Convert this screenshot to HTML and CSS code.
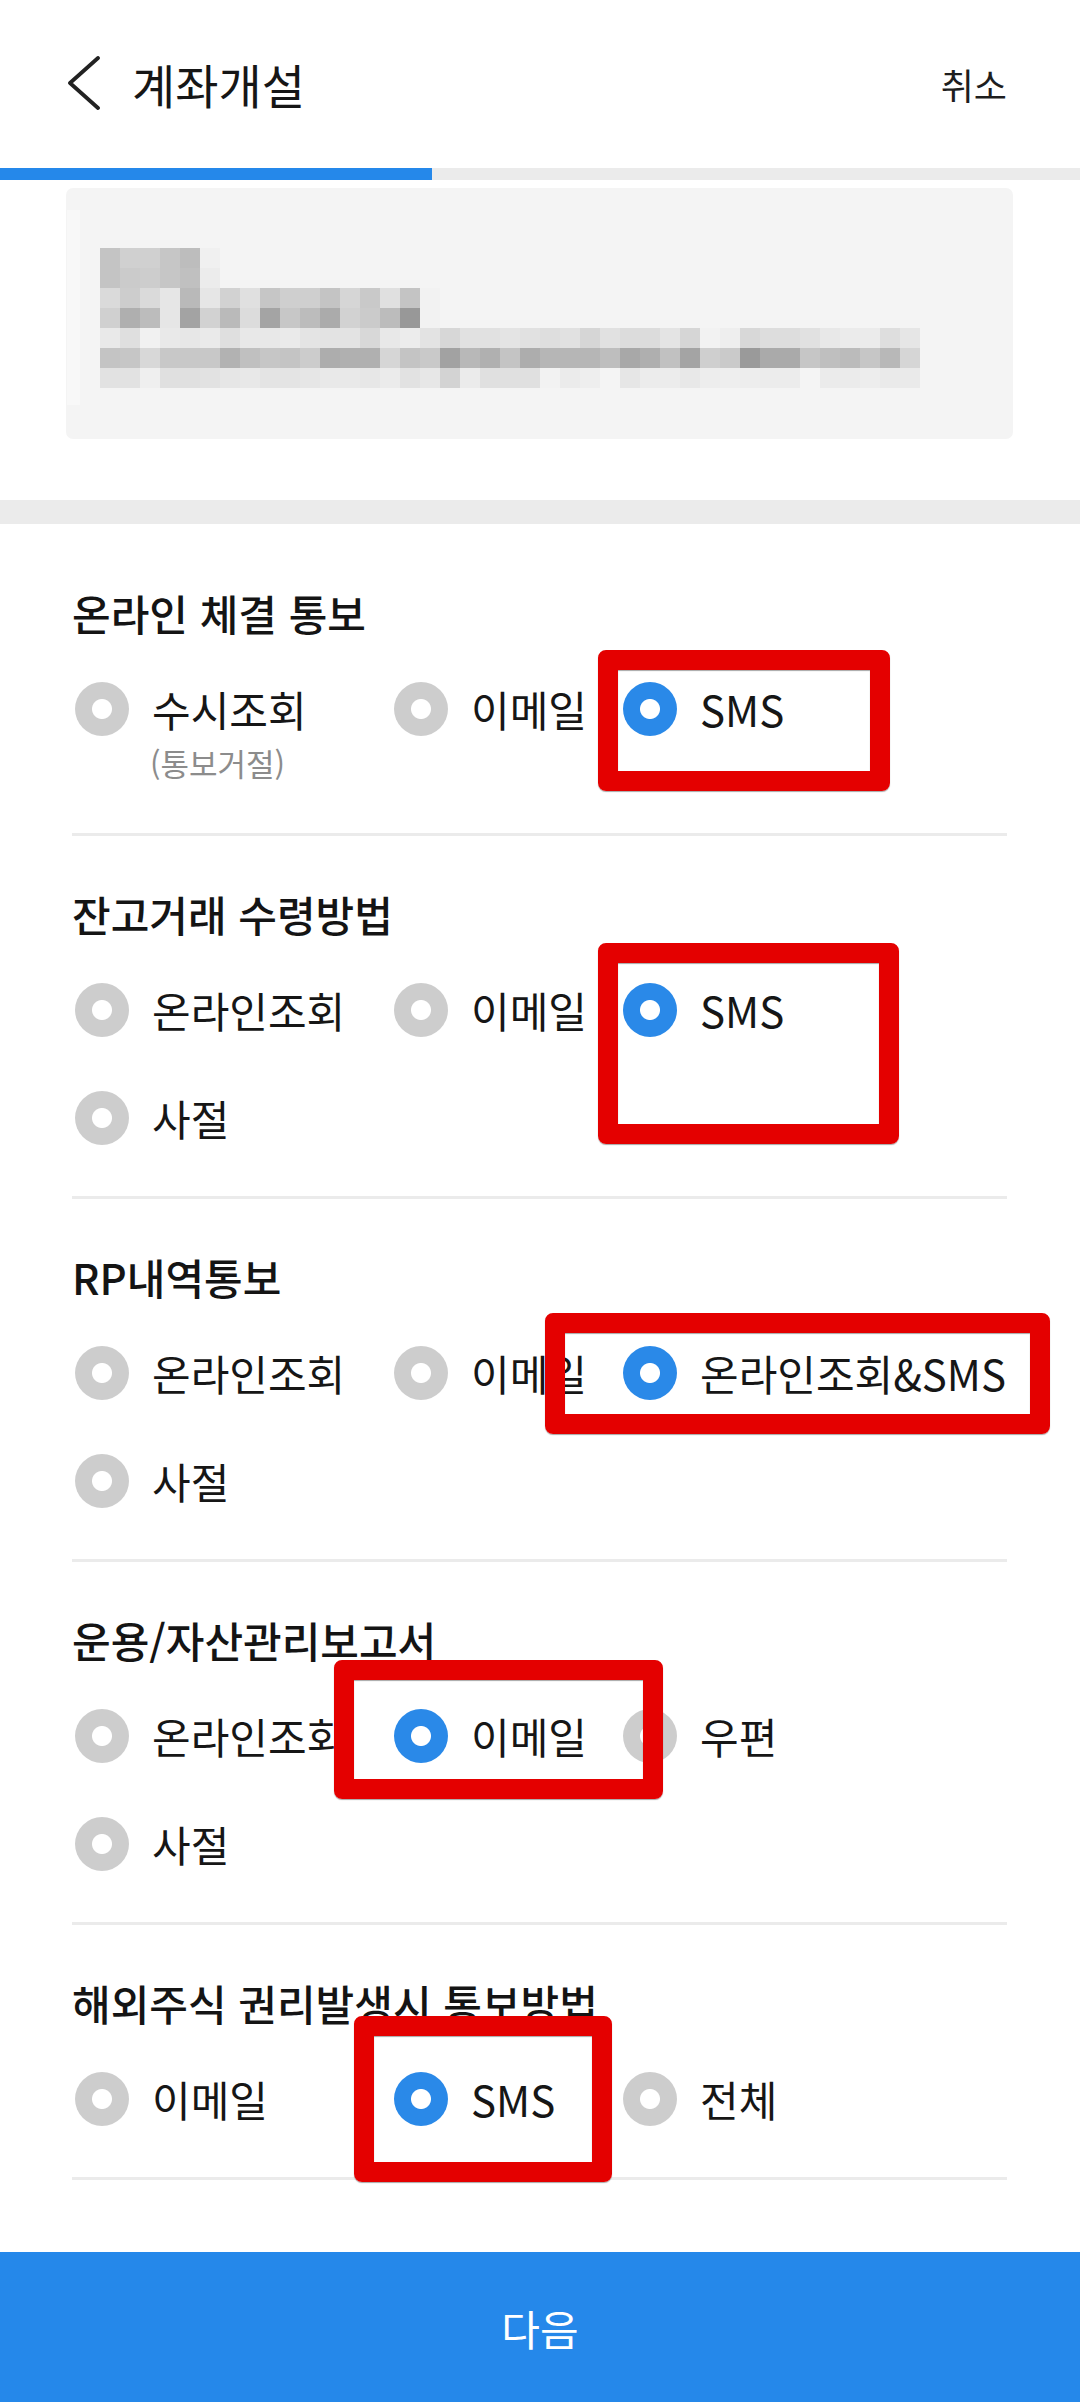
FILE: index.html
```html
<!DOCTYPE html>
<html lang="ko">
<head>
<meta charset="utf-8">
<title>계좌개설</title>
<link rel="stylesheet" href="styles.css">
</head>
<body>
<div class="page">
  <header class="appbar">
    <svg class="back" viewBox="0 0 40 56" width="40" height="56" aria-hidden="true"><path d="M34 2 L6 27 L34 52" fill="none" stroke="#222" stroke-width="3.8" stroke-linecap="round" stroke-linejoin="round"/></svg>
    <h1 class="title">계좌개설</h1>
    <span class="cancel">취소</span>
  </header>
  <div class="progress"><div class="progress-fill"></div></div>

  <div class="notice">
    <svg class="mosaic" viewBox="0 0 947 251" width="947" height="251" shape-rendering="crispEdges" aria-hidden="true">
      <rect x="1" y="22" width="13" height="195" fill="#f8f8f8"/>
      <g transform="translate(34 60) scale(20)">
        <rect x="0" y="0" width="1" height="1" fill="#c4c4c4"/><rect x="1" y="0" width="1" height="1" fill="#d0d0d0"/><rect x="2" y="0" width="1" height="1" fill="#d0d0d0"/><rect x="3" y="0" width="1" height="1" fill="#c6c6c6"/><rect x="4" y="0" width="1" height="1" fill="#bdbdbd"/><rect x="5" y="0" width="1" height="1" fill="#f0f0f0"/>
        <rect x="0" y="1" width="1" height="1" fill="#c4c4c4"/><rect x="1" y="1" width="1" height="1" fill="#cbcbcb"/><rect x="2" y="1" width="1" height="1" fill="#cdcdcd"/><rect x="3" y="1" width="1" height="1" fill="#c6c6c6"/><rect x="4" y="1" width="1" height="1" fill="#c0c0c0"/><rect x="5" y="1" width="1" height="1" fill="#ececec"/>
        <rect x="0" y="2" width="1" height="1" fill="#dadada"/><rect x="1" y="2" width="1" height="1" fill="#cdcdcd"/><rect x="2" y="2" width="1" height="1" fill="#dadada"/><rect x="3" y="2" width="1" height="1" fill="#e6e6e6"/><rect x="4" y="2" width="1" height="1" fill="#b9b9b9"/><rect x="5" y="2" width="1" height="1" fill="#e6e6e6"/><rect x="6" y="2" width="1" height="1" fill="#d2d2d2"/><rect x="7" y="2" width="1" height="1" fill="#e0e0e0"/><rect x="8" y="2" width="1" height="1" fill="#c6c6c6"/><rect x="9" y="2" width="1" height="1" fill="#cfcfcf"/><rect x="10" y="2" width="1" height="1" fill="#cfcfcf"/><rect x="11" y="2" width="1" height="1" fill="#c4c4c4"/><rect x="12" y="2" width="1" height="1" fill="#d6d6d6"/><rect x="13" y="2" width="1" height="1" fill="#c9c9c9"/><rect x="14" y="2" width="1" height="1" fill="#e0e0e0"/><rect x="15" y="2" width="1" height="1" fill="#c4c4c4"/><rect x="16" y="2" width="1" height="1" fill="#f2f2f2"/>
        <rect x="0" y="3" width="1" height="1" fill="#d0d0d0"/><rect x="1" y="3" width="1" height="1" fill="#afafaf"/><rect x="2" y="3" width="1" height="1" fill="#bcbcbc"/><rect x="3" y="3" width="1" height="1" fill="#e6e6e6"/><rect x="4" y="3" width="1" height="1" fill="#a3a3a3"/><rect x="5" y="3" width="1" height="1" fill="#d2d2d2"/><rect x="6" y="3" width="1" height="1" fill="#bababa"/><rect x="7" y="3" width="1" height="1" fill="#dcdcdc"/><rect x="8" y="3" width="1" height="1" fill="#a4a4a4"/><rect x="9" y="3" width="1" height="1" fill="#c7c7c7"/><rect x="10" y="3" width="1" height="1" fill="#bcbcbc"/><rect x="11" y="3" width="1" height="1" fill="#ababab"/><rect x="12" y="3" width="1" height="1" fill="#d2d2d2"/><rect x="13" y="3" width="1" height="1" fill="#cbcbcb"/><rect x="14" y="3" width="1" height="1" fill="#bcbcbc"/><rect x="15" y="3" width="1" height="1" fill="#989898"/><rect x="16" y="3" width="1" height="1" fill="#f2f2f2"/>
        <rect x="0" y="4" width="1" height="1" fill="#e9e9e9"/><rect x="1" y="4" width="1" height="1" fill="#dfdfdf"/><rect x="2" y="4" width="1" height="1" fill="#f1f1f1"/><rect x="3" y="4" width="1" height="1" fill="#e9e9e9"/><rect x="4" y="4" width="1" height="1" fill="#e7e7e7"/><rect x="5" y="4" width="1" height="1" fill="#eaeaea"/><rect x="6" y="4" width="1" height="1" fill="#dfdfdf"/><rect x="7" y="4" width="1" height="1" fill="#e8e8e8"/><rect x="8" y="4" width="1" height="1" fill="#e8e8e8"/><rect x="9" y="4" width="1" height="1" fill="#eaeaea"/><rect x="10" y="4" width="1" height="1" fill="#e4e4e4"/><rect x="11" y="4" width="1" height="1" fill="#e3e3e3"/><rect x="12" y="4" width="1" height="1" fill="#e3e3e3"/><rect x="13" y="4" width="1" height="1" fill="#d8d8d8"/><rect x="14" y="4" width="1" height="1" fill="#e8e8e8"/><rect x="15" y="4" width="1" height="1" fill="#ececec"/><rect x="16" y="4" width="1" height="1" fill="#e3e3e3"/><rect x="17" y="4" width="1" height="1" fill="#d7d7d7"/><rect x="18" y="4" width="1" height="1" fill="#e1e1e1"/><rect x="19" y="4" width="1" height="1" fill="#e1e1e1"/><rect x="20" y="4" width="1" height="1" fill="#e4e4e4"/><rect x="21" y="4" width="1" height="1" fill="#e1e1e1"/><rect x="22" y="4" width="1" height="1" fill="#dedede"/><rect x="23" y="4" width="1" height="1" fill="#e1e1e1"/><rect x="24" y="4" width="1" height="1" fill="#d6d6d6"/><rect x="25" y="4" width="1" height="1" fill="#e1e1e1"/><rect x="26" y="4" width="1" height="1" fill="#dcdcdc"/><rect x="27" y="4" width="1" height="1" fill="#dcdcdc"/><rect x="28" y="4" width="1" height="1" fill="#e4e4e4"/><rect x="29" y="4" width="1" height="1" fill="#d6d6d6"/><rect x="30" y="4" width="1" height="1" fill="#f2f2f2"/><rect x="31" y="4" width="1" height="1" fill="#eeeeee"/><rect x="32" y="4" width="1" height="1" fill="#d8d8d8"/><rect x="33" y="4" width="1" height="1" fill="#dddddd"/><rect x="34" y="4" width="1" height="1" fill="#dddddd"/><rect x="35" y="4" width="1" height="1" fill="#e1e1e1"/><rect x="36" y="4" width="1" height="1" fill="#e8e8e8"/><rect x="37" y="4" width="1" height="1" fill="#ebebeb"/><rect x="38" y="4" width="1" height="1" fill="#ebebeb"/><rect x="39" y="4" width="1" height="1" fill="#dedede"/><rect x="40" y="4" width="1" height="1" fill="#e6e6e6"/>
        <rect x="0" y="5" width="1" height="1" fill="#c4c4c4"/><rect x="1" y="5" width="1" height="1" fill="#c6c6c6"/><rect x="2" y="5" width="1" height="1" fill="#d8d8d8"/><rect x="3" y="5" width="1" height="1" fill="#c8c8c8"/><rect x="4" y="5" width="1" height="1" fill="#c8c8c8"/><rect x="5" y="5" width="1" height="1" fill="#c8c8c8"/><rect x="6" y="5" width="1" height="1" fill="#b2b2b2"/><rect x="7" y="5" width="1" height="1" fill="#c0c0c0"/><rect x="8" y="5" width="1" height="1" fill="#c6c6c6"/><rect x="9" y="5" width="1" height="1" fill="#c4c4c4"/><rect x="10" y="5" width="1" height="1" fill="#cccccc"/><rect x="11" y="5" width="1" height="1" fill="#adadad"/><rect x="12" y="5" width="1" height="1" fill="#b0b0b0"/><rect x="13" y="5" width="1" height="1" fill="#b0b0b0"/><rect x="14" y="5" width="1" height="1" fill="#d6d6d6"/><rect x="15" y="5" width="1" height="1" fill="#c4c4c4"/><rect x="16" y="5" width="1" height="1" fill="#c9c9c9"/><rect x="17" y="5" width="1" height="1" fill="#a2a2a2"/><rect x="18" y="5" width="1" height="1" fill="#b8b8b8"/><rect x="19" y="5" width="1" height="1" fill="#b0b0b0"/><rect x="20" y="5" width="1" height="1" fill="#c4c4c4"/><rect x="21" y="5" width="1" height="1" fill="#adadad"/><rect x="22" y="5" width="1" height="1" fill="#b6b6b6"/><rect x="23" y="5" width="1" height="1" fill="#b6b6b6"/><rect x="24" y="5" width="1" height="1" fill="#b6b6b6"/><rect x="25" y="5" width="1" height="1" fill="#bebebe"/><rect x="26" y="5" width="1" height="1" fill="#a8a8a8"/><rect x="27" y="5" width="1" height="1" fill="#afafaf"/><rect x="28" y="5" width="1" height="1" fill="#c1c1c1"/><rect x="29" y="5" width="1" height="1" fill="#a4a4a4"/><rect x="30" y="5" width="1" height="1" fill="#cfcfcf"/><rect x="31" y="5" width="1" height="1" fill="#cacaca"/><rect x="32" y="5" width="1" height="1" fill="#9a9a9a"/><rect x="33" y="5" width="1" height="1" fill="#aaaaaa"/><rect x="34" y="5" width="1" height="1" fill="#aaaaaa"/><rect x="35" y="5" width="1" height="1" fill="#c6c6c6"/><rect x="36" y="5" width="1" height="1" fill="#bfbfbf"/><rect x="37" y="5" width="1" height="1" fill="#bbbbbb"/><rect x="38" y="5" width="1" height="1" fill="#c6c6c6"/><rect x="39" y="5" width="1" height="1" fill="#b8b8b8"/><rect x="40" y="5" width="1" height="1" fill="#d6d6d6"/>
        <rect x="0" y="6" width="1" height="1" fill="#e2e2e2"/><rect x="1" y="6" width="1" height="1" fill="#e2e2e2"/><rect x="2" y="6" width="1" height="1" fill="#efefef"/><rect x="3" y="6" width="1" height="1" fill="#e0e0e0"/><rect x="4" y="6" width="1" height="1" fill="#e0e0e0"/><rect x="5" y="6" width="1" height="1" fill="#e2e2e2"/><rect x="6" y="6" width="1" height="1" fill="#e6e6e6"/><rect x="7" y="6" width="1" height="1" fill="#e8e8e8"/><rect x="8" y="6" width="1" height="1" fill="#e4e4e4"/><rect x="9" y="6" width="1" height="1" fill="#e4e4e4"/><rect x="10" y="6" width="1" height="1" fill="#e6e6e6"/><rect x="11" y="6" width="1" height="1" fill="#e9e9e9"/><rect x="12" y="6" width="1" height="1" fill="#e9e9e9"/><rect x="13" y="6" width="1" height="1" fill="#e7e7e7"/><rect x="14" y="6" width="1" height="1" fill="#ebebeb"/><rect x="15" y="6" width="1" height="1" fill="#e2e2e2"/><rect x="16" y="6" width="1" height="1" fill="#e7e7e7"/><rect x="17" y="6" width="1" height="1" fill="#d3d3d3"/><rect x="18" y="6" width="1" height="1" fill="#ebebeb"/><rect x="19" y="6" width="1" height="1" fill="#e0e0e0"/><rect x="20" y="6" width="1" height="1" fill="#e0e0e0"/><rect x="21" y="6" width="1" height="1" fill="#e0e0e0"/><rect x="22" y="6" width="1" height="1" fill="#f2f2f2"/><rect x="23" y="6" width="1" height="1" fill="#ebebeb"/><rect x="24" y="6" width="1" height="1" fill="#eeeeee"/><rect x="25" y="6" width="1" height="1" fill="#f4f4f4"/><rect x="26" y="6" width="1" height="1" fill="#e6e6e6"/><rect x="27" y="6" width="1" height="1" fill="#ececec"/><rect x="28" y="6" width="1" height="1" fill="#ececec"/><rect x="29" y="6" width="1" height="1" fill="#e8e8e8"/><rect x="30" y="6" width="1" height="1" fill="#ededed"/><rect x="31" y="6" width="1" height="1" fill="#eeeeee"/><rect x="32" y="6" width="1" height="1" fill="#ededed"/><rect x="33" y="6" width="1" height="1" fill="#ececec"/><rect x="34" y="6" width="1" height="1" fill="#ececec"/><rect x="35" y="6" width="1" height="1" fill="#f4f4f4"/><rect x="36" y="6" width="1" height="1" fill="#ebebeb"/><rect x="37" y="6" width="1" height="1" fill="#ebebeb"/><rect x="38" y="6" width="1" height="1" fill="#ededed"/><rect x="39" y="6" width="1" height="1" fill="#eaeaea"/><rect x="40" y="6" width="1" height="1" fill="#eaeaea"/>
      </g>
    </svg>
  </div>
  <div class="band"></div>

  <main class="form">
    <section class="group group-first">
      <h2 class="group-title">온라인 체결 통보</h2>
      <div class="options">
        <div class="opt"><span class="radio"></span><span class="label">수시조회<small class="sub">(통보거절)</small></span></div>
        <div class="opt"><span class="radio"></span><span class="label">이메일</span></div>
        <div class="opt"><span class="radio on"></span><span class="label">SMS</span></div>
      </div>
    </section>

    <section class="group">
      <h2 class="group-title">잔고거래 수령방법</h2>
      <div class="options">
        <div class="opt"><span class="radio"></span><span class="label">온라인조회</span></div>
        <div class="opt"><span class="radio"></span><span class="label">이메일</span></div>
        <div class="opt"><span class="radio on"></span><span class="label">SMS</span></div>
        <div class="opt"><span class="radio"></span><span class="label">사절</span></div>
      </div>
    </section>

    <section class="group">
      <h2 class="group-title">RP내역통보</h2>
      <div class="options">
        <div class="opt"><span class="radio"></span><span class="label">온라인조회</span></div>
        <div class="opt"><span class="radio"></span><span class="label">이메일</span></div>
        <div class="opt"><span class="radio on"></span><span class="label">온라인조회&amp;SMS</span></div>
        <div class="opt"><span class="radio"></span><span class="label">사절</span></div>
      </div>
    </section>

    <section class="group">
      <h2 class="group-title">운용/자산관리보고서</h2>
      <div class="options">
        <div class="opt"><span class="radio"></span><span class="label">온라인조회</span></div>
        <div class="opt"><span class="radio on"></span><span class="label">이메일</span></div>
        <div class="opt"><span class="radio"></span><span class="label">우편</span></div>
        <div class="opt"><span class="radio"></span><span class="label">사절</span></div>
      </div>
    </section>

    <section class="group">
      <h2 class="group-title">해외주식 권리발생시 통보방법</h2>
      <div class="options">
        <div class="opt"><span class="radio"></span><span class="label">이메일</span></div>
        <div class="opt"><span class="radio on"></span><span class="label">SMS</span></div>
        <div class="opt"><span class="radio"></span><span class="label">전체</span></div>
      </div>
    </section>
  </main>

  <button class="next" type="button">다음</button>

  <div class="mark mark-1"></div>
  <div class="mark mark-2"></div>
  <div class="mark mark-3"></div>
  <div class="mark mark-4"></div>
  <div class="mark mark-5"></div>
</div>
</body>
</html>
```

FILE: styles.css
```css
* { box-sizing: border-box; }

html, body {
  margin: 0;
  padding: 0;
  background: #ffffff;
}

body {
  font-family: "Noto Sans CJK KR", "Noto Sans", sans-serif;
  color: #1b1b1b;
}

.page {
  position: relative;
  width: 1080px;
  height: 2402px;
  display: flex;
  flex-direction: column;
  overflow: hidden;
}

/* app bar */
.appbar {
  height: 168px;
  flex: none;
  display: flex;
  align-items: center;
  padding: 0 73px 0 64px;
}

.back {
  display: block;
  flex: none;
}

.title {
  margin: 0 0 0 28px;
  font-size: 47px;
  font-weight: 400;
  line-height: 60px;
  color: #161616;
}

.cancel {
  margin-left: auto;
  font-size: 36px;
  line-height: 48px;
  color: #1e1e1e;
}

/* progress */
.progress {
  height: 12px;
  flex: none;
  background: #ebebeb;
}

.progress-fill {
  width: 40%;
  height: 100%;
  background: #2588ea;
}

/* blurred notice card */
.notice {
  flex: none;
  margin: 8px 67px 61px 66px;
  height: 251px;
  background: #f4f4f4;
  border-radius: 7px;
  overflow: hidden;
}

.mosaic {
  display: block;
}

.band {
  height: 24px;
  flex: none;
  background: #ebebeb;
}

/* form */
.form {
  flex: 1;
  padding: 0 73px 0 72px;
}

.group {
  padding: 50px 0 24px;
  border-bottom: 3px solid #ebebeb;
}

.group-first {
  padding-top: 61px;
}

.group-title {
  margin: 0 0 14px;
  font-size: 42px;
  font-weight: 500;
  line-height: 56px;
  color: #141414;
}

.options {
  display: grid;
  grid-template-columns: 319px 229px 1fr;
}

.opt {
  display: flex;
  align-items: flex-start;
  padding: 27px 0;
}

.radio {
  flex: none;
  width: 54px;
  height: 54px;
  margin-left: 3px;
  border-radius: 50%;
  background: radial-gradient(circle, #ffffff 0, #ffffff 9.5px, #cdcdcd 10.5px);
}

.radio.on {
  background: radial-gradient(circle, #ffffff 0, #ffffff 9.5px, #2a89e8 10.5px);
}

.label {
  margin-left: 23px;
  font-size: 42px;
  line-height: 54px;
  white-space: nowrap;
  color: #161616;
}

.sub {
  display: block;
  margin: 8px 0 0 -2px;
  font-size: 31px;
  line-height: 38px;
  color: #8c8c8c;
}

/* bottom button */
.next {
  flex: none;
  height: 150px;
  border: 0;
  margin: 0;
  padding: 0;
  background: #2588ea;
  color: #ffffff;
  font-family: "Noto Sans CJK KR", "Noto Sans", sans-serif;
  font-size: 42px;
  font-weight: 400;
}

/* red annotation boxes drawn over the screen */
.mark {
  position: absolute;
  border: 20px solid #e40000;
  border-radius: 8px;
  box-shadow: 0 1px 1px rgba(0, 0, 0, 0.35), inset 0 1px 1px rgba(0, 0, 0, 0.35);
  pointer-events: none;
}

.mark-1 { left: 598px; top: 650px; width: 292px; height: 141px; }
.mark-2 { left: 598px; top: 943px; width: 301px; height: 201px; }
.mark-3 { left: 545px; top: 1313px; width: 505px; height: 121px; }
.mark-4 { left: 334px; top: 1660px; width: 329px; height: 139px; }
.mark-5 { left: 354px; top: 2016px; width: 258px; height: 166px; }
```
